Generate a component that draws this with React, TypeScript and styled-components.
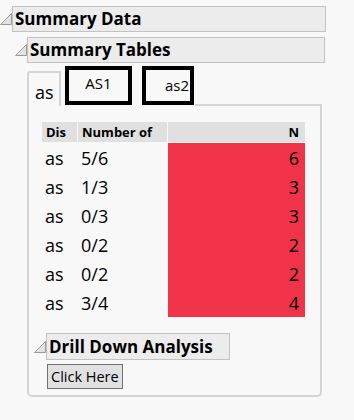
import React from "react"
import styled, { createGlobalStyle } from "styled-components"

const GlobalStyle = createGlobalStyle`
  html, body {
    margin: 0;
    padding: 0;
    background: #f8f8f8;
  }
  body {
    font-family: "Open Sans", "Noto Sans", sans-serif;
    color: #000;
  }
`

type Row = { dis: string; num: string; n: number }

const rows: Row[] = [
  { dis: "as", num: "5/6", n: 6 },
  { dis: "as", num: "1/3", n: 3 },
  { dis: "as", num: "0/3", n: 3 },
  { dis: "as", num: "0/2", n: 2 },
  { dis: "as", num: "0/2", n: 2 },
  { dis: "as", num: "3/4", n: 4 },
]

const Disclosure: React.FC = () => (
  <Toggle width="12" height="12" viewBox="0 0 12 12">
    <polygon points="0.5,11.5 11.5,0.5 11.5,11.5" fill="#e2e2e2" stroke="#9a9a9a" strokeWidth="1" />
  </Toggle>
)

export default function App() {
  return (
    <Page>
      <GlobalStyle />
      <OutlineRow>
        <Disclosure />
        <OutlineTitle width={310}>Summary Data</OutlineTitle>
      </OutlineRow>
      <Nested>
        <OutlineRow>
          <Disclosure />
          <OutlineTitle width={294}>Summary Tables</OutlineTitle>
        </OutlineRow>
        <Tabs>
          <TabStrip>
            <ActiveTab>as</ActiveTab>
            <BoxedTab width={67} align="center">AS1</BoxedTab>
            <BoxedTab width={52} align="right">as2</BoxedTab>
            <StripFill />
          </TabStrip>
          <Panel>
            <Table>
              <HeadCell>Dis</HeadCell>
              <HeadCell>Number of</HeadCell>
              <HeadCell align="right">N</HeadCell>
              {rows.map((r, i) => (
                <React.Fragment key={i}>
                  <Cell>{r.dis}</Cell>
                  <Cell>{r.num}</Cell>
                  <Cell align="right" filled>{r.n}</Cell>
                </React.Fragment>
              ))}
            </Table>
            <DrillSection>
              <OutlineRow>
                <Disclosure />
                <DrillTitle>Drill Down Analysis</DrillTitle>
              </OutlineRow>
              <Button>Click Here</Button>
            </DrillSection>
          </Panel>
        </Tabs>
      </Nested>
    </Page>
  )
}

const Page = styled.div`
  padding-top: 6px;
  display: flex;
  flex-direction: column;
  gap: 5px;
`

const Toggle = styled.svg`
  flex: none;
  display: block;
`

const OutlineRow = styled.div`
  display: flex;
  align-items: center;
`

const OutlineTitle = styled.div<{ width: number }>`
  width: ${p => p.width}px;
  height: 24px;
  box-sizing: content-box;
  border: 1px solid #c2c2c2;
  background: #ececec;
  font-weight: 700;
  font-size: 17px;
  line-height: 24px;
  padding-left: 2px;
  white-space: nowrap;
`

const Nested = styled.div`
  padding-left: 15px;
  display: flex;
  flex-direction: column;
  gap: 2px;
`

const Tabs = styled.div`
  margin-left: 12px;
  width: 295px;
`

const TabStrip = styled.div`
  display: flex;
  align-items: flex-end;
  height: 41px;
`

const ActiveTab = styled.div`
  width: 34px;
  height: 35px;
  box-sizing: border-box;
  border: 2px solid #d4d4d4;
  border-bottom: none;
  border-top-left-radius: 3px;
  background: #f8f8f8;
  font-size: 18px;
  line-height: 38px;
  padding-left: 6px;
  margin-right: 4px;
`

const BoxedTab = styled.div<{ width: number; align: "center" | "right" }>`
  width: ${p => p.width}px;
  height: 39px;
  box-sizing: border-box;
  border: 4px solid #000;
  background: #f8f8f8;
  font-size: 15px;
  text-align: ${p => p.align};
  padding: ${p => (p.align === "right" ? "5px 1px 0 0" : "3px 0 0")};
  line-height: 20px;
  margin-right: 10px;
  margin-bottom: 1px;
`

const StripFill = styled.div`
  flex: 1;
  align-self: flex-end;
  border-bottom: 2px solid #d4d4d4;
  margin-left: -9px;
`

const Panel = styled.div`
  border: 2px solid #d4d4d4;
  border-top: none;
  border-radius: 0 0 5px 5px;
  padding: 16px 0 6px 5px;
`

const Table = styled.div`
  display: grid;
  grid-template-columns: 35px 89px 137px;
  grid-auto-rows: 29px;
  grid-template-rows: 21px;
  column-gap: 1px;
  margin-left: 8px;
  width: 263px;
`

const HeadCell = styled.div<{ align?: "right" }>`
  background: #e0e0e0;
  height: 20px;
  font-size: 13px;
  font-weight: 700;
  line-height: 20px;
  padding: 0 6px 0 4px;
  text-align: ${p => p.align ?? "left"};
  white-space: nowrap;
  overflow: hidden;
`

const Cell = styled.div<{ align?: "right"; filled?: boolean }>`
  background: ${p => (p.filled ? "#f03348" : "transparent")};
  font-size: 18px;
  line-height: 25px;
  padding: 3px 6px 0 3px;
  text-align: ${p => p.align ?? "left"};
`

const DrillSection = styled.div`
  margin-top: 16px;
  display: flex;
  flex-direction: column;
  gap: 4px;
`

const DrillTitle = styled.div`
  height: 25px;
  border: 1px solid #c2c2c2;
  background: #ececec;
  font-weight: 700;
  font-size: 17px;
  line-height: 25px;
  padding: 0 16px 0 2px;
  white-space: nowrap;
`

const Button = styled.button`
  align-self: flex-start;
  margin-left: 13px;
  height: 25px;
  padding: 0 3px;
  border: 1px solid #707070;
  border-radius: 0;
  background: #e1e1e1;
  font-family: "Open Sans", "Noto Sans", sans-serif;
  font-size: 14.5px;
  color: #000;
`
